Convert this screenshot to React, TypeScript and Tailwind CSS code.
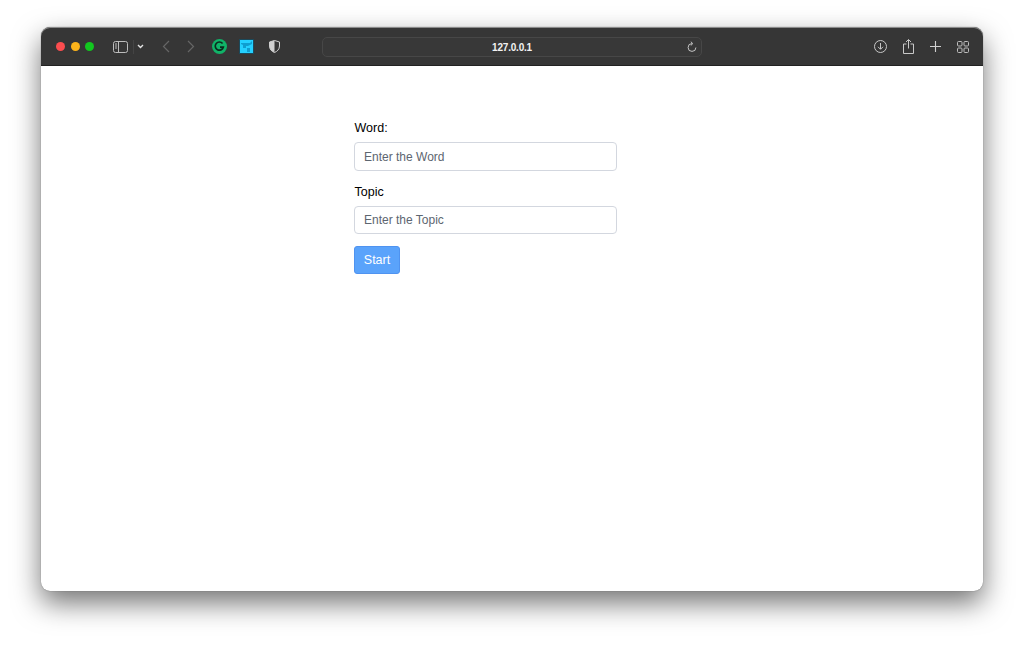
import React from "react";

function Toolbar() {
  return (
    <div className="flex h-[39px] items-center border-b border-[#222] bg-[#363636] pt-[1px] rounded-t-[9px] shadow-[inset_0_1px_0_#8a8a8a]">
      <div className="flex items-center gap-[5.5px] pl-[15px]">
        <span className="h-[9px] w-[9px] rounded-full bg-[#fb4d4f]" />
        <span className="h-[9px] w-[9px] rounded-full bg-[#fdb41b]" />
        <span className="h-[9px] w-[9px] rounded-full bg-[#12c71f]" />
      </div>
      <svg className="ml-[19px]" width="15" height="12" viewBox="0 0 15 12" fill="none" stroke="#bdbdbd" strokeWidth="1">
        <rect x="0.5" y="0.5" width="14" height="11" rx="2" />
        <path d="M5.5 .5v11" />
        <path d="M2 3h2M2 5h2M2 7h2" />
      </svg>
      <div className="ml-[5px] h-[14px] w-px bg-[#444]" />
      <svg className="ml-[3px]" width="7" height="5" viewBox="0 0 7 5" fill="none" stroke="#e4e4e4" strokeWidth="1.4">
        <path d="M1 1l2.5 2.5L6 1" />
      </svg>
      <svg className="ml-[18px]" width="8" height="13" viewBox="0 0 8 13" fill="none" stroke="#666" strokeWidth="1.2">
        <path d="M7 1L1.5 6.5 7 12" />
      </svg>
      <svg className="ml-[17px]" width="8" height="13" viewBox="0 0 8 13" fill="none" stroke="#666" strokeWidth="1.2">
        <path d="M1 1l5.5 5.5L1 12" />
      </svg>
      <svg className="ml-[17px]" width="15" height="15" viewBox="0 0 15 15">
        <circle cx="7.5" cy="7.5" r="7.5" fill="#10b368" />
        <path d="M10.6 4.6A4.1 4.1 0 1 0 11.3 8.2H8" fill="none" stroke="#0b2b1e" strokeWidth="1.7" />
      </svg>
      <svg className="ml-[12px]" width="15" height="15" viewBox="0 0 15 15">
        <rect width="15" height="15" fill="#24d0ff" />
        <rect x="0.5" y="0.5" width="14" height="14" fill="none" stroke="#1a4a5c" strokeWidth="1" />
        <path d="M2 4h9l2-2v3l-4 2H7v2H4V6L2 5z" fill="#0f9ed0" />
        <path d="M8 9h3v4H8z" fill="#0f9ed0" />
      </svg>
      <svg className="ml-[15px]" width="11" height="13" viewBox="0 0 11 13">
        <path d="M5.5 .5L10.5 2v4c0 3.5-2.5 5.5-5 6.500-2.500-1-5-3-5-6.500V2z" fill="none" stroke="#cfcfcf" />
        <path d="M5.500 .5L.5 2v4c0 3.500 2.500 5.500 5 6.500z" fill="#cfcfcf" />
      </svg>
      <div className="relative ml-[42px] flex h-[20px] w-[380px] items-center justify-center rounded-[5px] border border-[#474747] bg-[#383838]">
        <span className="pt-[1px] text-[10px] font-bold tracking-[-0.2px] text-[#f2f2f2]">127.0.0.1</span>
        <svg className="absolute right-[4px] top-[3px]" width="10" height="12" viewBox="0 0 10 12" fill="none" stroke="#c4c4c4" strokeWidth="1">
          <path d="M8.900 6.500A3.900 3.900 0 1 1 5 2.600" />
          <path d="M3.800 .7L5.800 2.600 3.800 4.500" />
        </svg>
      </div>
      <svg className="ml-[172px]" width="13" height="13" viewBox="0 0 13 13" fill="none" stroke="#c8c8c8" strokeWidth="1">
        <circle cx="6.500" cy="6.500" r="6" />
        <path d="M6.500 3v6M4 6.800l2.500 2.500L9 6.800" />
      </svg>
      <svg className="ml-[16px]" width="11" height="15" viewBox="0 0 11 15" fill="none" stroke="#c8c8c8" strokeWidth="1">
        <path d="M3.500 5H.5v9.500h10V5h-3" />
        <path d="M5.500 9.500V.8M3 3l2.500-2.500L8 3" />
      </svg>
      <svg className="ml-[16px]" width="11" height="11" viewBox="0 0 11 11" fill="none" stroke="#d0d0d0" strokeWidth="1.1">
        <path d="M5.500 0v11M0 5.500h11" />
      </svg>
      <svg className="ml-[16px]" width="12" height="12" viewBox="0 0 12 12" fill="none" stroke="#bdbdbd" strokeWidth="1">
        <rect x="0.500" y="0.500" width="4.500" height="4.500" rx="1" />
        <rect x="7" y="0.500" width="4.500" height="4.500" rx="1" />
        <rect x="0.500" y="7" width="4.500" height="4.500" rx="1" />
        <rect x="7" y="7" width="4.500" height="4.500" rx="1" />
      </svg>
    </div>
  );
}

export default function App() {
  return (
    <div className="h-[646px] w-[1024px] overflow-hidden bg-white pl-[41px] pt-[27px] [font-family:'Liberation_Sans',sans-serif]">
      <div className="flex h-[564px] w-[942px] flex-col rounded-[9px] bg-white shadow-[0_0_1px_#555,0_12px_28px_rgba(0,0,0,0.55)]">
        <Toolbar />
        <div className="ml-[313px] flex w-[263px] flex-col pt-[54px]">
          <label className="pl-[0.5px] text-[12.500px] leading-[16px] text-black">Word:</label>
          <input
            placeholder="Enter the Word"
            className="mt-[6px] h-[29px] w-[263px] rounded-[4px] border border-[#d3d7df] bg-white px-[9px] text-[12px] outline-none placeholder:text-[#5d6670]"
          />
          <label className="mt-[13px] pl-[0.5px] text-[12.500px] leading-[16px] text-black">Topic</label>
          <input
            placeholder="Enter the Topic"
            className="mt-[6px] h-[28px] w-[263px] rounded-[4px] border border-[#d3d7df] bg-white px-[9px] text-[12px] outline-none placeholder:text-[#5d6670]"
          />
          <button className="mt-[12px] h-[28px] w-[46px] rounded-[3px] border border-[#4f93f0] bg-[#5aa3fb] text-[12.500px] text-white">
            Start
          </button>
        </div>
      </div>
    </div>
  );
}
